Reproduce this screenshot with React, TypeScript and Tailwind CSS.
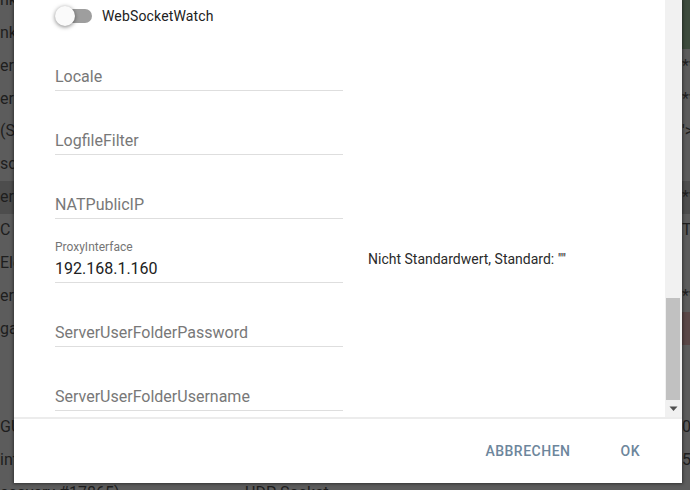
import React from "react";

type Row = { l: string; m?: string; r: string; bg?: string; rbg?: string };

const rows: Row[] = [
  { l: "nk.Settings", r: "", rbg: "bg-[#3d4b3d]" },
  { l: "nk Address", r: "", rbg: "bg-[#3d4b3d]" },
  { l: "erVersion", r: "**" },
  { l: "erVersion", r: "**" },
  { l: "(SSL)", r: "'>" },
  { l: "scan", r: "" },
  { l: "erVersion", r: "**", bg: "bg-[#4d4d4d]" },
  { l: "C Port", r: "T" },
  { l: "Election", r: "" },
  { l: "erVersion", r: "**" },
  { l: "gateway", r: "", rbg: "bg-[#5a4747]" },
  { l: "", r: "" },
  { l: "", r: "" },
  { l: "GUID", r: "0" },
  { l: "interval", r: "5" },
  { l: "ecovery #17865)", m: "UDP Socket", r: "" },
];

function Field({ placeholder, label, value }: { placeholder?: string; label?: string; value?: string }) {
  return (
    <div className="h-16 flex flex-col justify-end pb-[4px] border-b border-[#dedede]">
      {label && <div className="text-[12px] leading-[14px] text-[#757575] mb-[5.5px]">{label}</div>}
      {value ? (
        <div className="text-[16px] leading-[19px] text-[#212121]">{value}</div>
      ) : (
        <div className="text-[16px] leading-[19px] text-[#787878]">{placeholder}</div>
      )}
    </div>
  );
}

export default function App() {
  return (
    <div className="relative w-[690px] h-[490px] overflow-hidden bg-[#5c5c5c] font-[Roboto,sans-serif]">
      {/* dimmed background list */}
      <div className="flex flex-col mt-[-16.5px]">
        {rows.map((r, i) => (
          <div key={i} className={`h-[32.86px] flex items-center text-[16px] text-[#1e1e1e] ${r.bg ?? ""}`}>
            <div className="w-[245px] whitespace-nowrap overflow-hidden">{r.l}</div>
            <div className="w-[437px] whitespace-nowrap overflow-hidden">{r.m ?? ""}</div>
            <div className={`flex-1 h-full flex items-center whitespace-nowrap overflow-hidden ${r.rbg ?? ""}`}>{r.r}</div>
          </div>
        ))}
      </div>

      {/* dialog */}
      <div className="absolute left-[14px] top-0 w-[668px] h-[483px] bg-white flex flex-col shadow-[0_0_3px_1px_rgba(0,0,0,0.45)]">
        <div className="h-[417px] flex">
          <div className="flex-1 pl-[41px] overflow-hidden">
            <div className="pt-[6px] h-[27px] flex items-start">
              <div className="flex items-center h-5">
                <div className="relative w-[38px] h-5">
                  <div className="absolute left-[1px] top-[3px] w-[36px] h-[14px] rounded-full bg-[#9e9e9e]" />
                  <div className="absolute left-0 top-0 w-5 h-5 rounded-full bg-[#fafafa] shadow-[0_1px_4px_rgba(0,0,0,0.5)]" />
                </div>
                <span className="ml-[9px] text-[14px] tracking-[0.15px] text-[#212121]">WebSocketWatch</span>
              </div>
            </div>
            <div className="grid grid-cols-[288px_1fr] gap-x-[25px]">
              <Field placeholder="Locale" />
              <div />
              <Field placeholder="LogfileFilter" />
              <div />
              <Field placeholder="NATPublicIP" />
              <div />
              <Field label="ProxyInterface" value="192.168.1.160" />
              <div className="pt-[32px] text-[14px] leading-[16px] text-[#2a2a2a]">
                Nicht Standardwert, Standard: &quot;&quot;
              </div>
              <Field placeholder="ServerUserFolderPassword" />
              <div />
              <Field placeholder="ServerUserFolderUsername" />
              <div />
            </div>
          </div>
          <div className="relative w-[17px] h-full bg-[#f1f1f1]">
            <div className="absolute left-[1px] top-[298px] w-[14px] h-[102px] bg-[#c1c1c1]" />
            <svg className="absolute left-[4px] top-[406px]" width="9" height="6" viewBox="0 0 9 6">
              <path d="M0.5 0.5 L8.5 0.5 L4.5 5 Z" fill="#505050" />
            </svg>
          </div>
        </div>
        <div className="flex-1 border-t-2 border-[#ececec] flex items-center justify-end pr-[42px]">
          <span className="text-[14px] font-medium tracking-[0.5px] text-[#6d869c] mr-[50px]">ABBRECHEN</span>
          <span className="text-[14px] font-medium tracking-[0.5px] text-[#6d869c]">OK</span>
        </div>
      </div>
    </div>
  );
}
